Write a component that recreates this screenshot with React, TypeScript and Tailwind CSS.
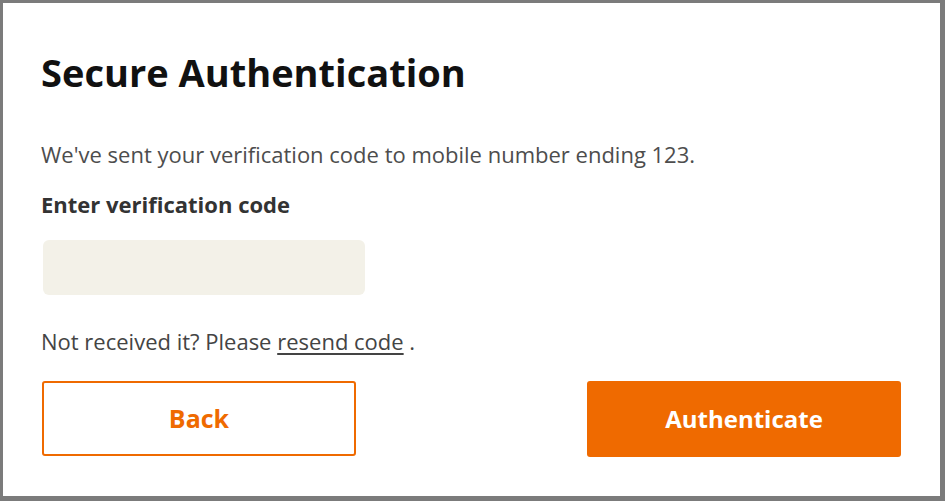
export default function App() {
    return (
        <div
            className="w-[945px] h-[501px] bg-white border-[#7b7b7b] border-t-[3px] border-l-[3px] border-r-[5px] border-b-[5px] box-border"
            style={{ fontFamily: '"Open Sans", "Liberation Sans", sans-serif' }}
        >
            <div className="pl-[38px] pr-[39px] pt-[45px] flex flex-col">
                <h1 className="text-[38px] leading-[48px] font-bold text-[#111]">
                    Secure Authentication
                </h1>

                <p className="mt-[44px] text-[22px] leading-[28px] text-[#4d4d4d]">
                    We've sent your verification code to mobile number ending 123.
                </p>

                <label className="mt-[22px] text-[22px] leading-[28px] font-bold text-[#333]">
                    Enter verification code
                </label>

                <input
                    type="text"
                    className="mt-[22px] ml-[2px] w-[322px] h-[55px] rounded-[6px] bg-[#f3f1e8] outline-none px-3"
                />

                <p className="mt-[32px] text-[22px] leading-[28px] text-[#444]">
                    Not received it? Please{" "}
                    <a href="#" className="underline underline-offset-3 text-[#444]">
                        resend code
                    </a>{" "}
                    .
                </p>

                <div className="mt-[26px] ml-[1px] flex justify-between">
                    <button className="w-[314px] h-[75px] rounded-[3px] border-2 border-[#ef6a00] bg-white text-[#ef6a00] text-[25px] font-bold">
                        Back
                    </button>
                    <button className="w-[314px] h-[76px] rounded-[3px] bg-[#ef6a00] text-white text-[24px] font-bold">
                        Authenticate
                    </button>
                </div>
            </div>
        </div>
    );
}
